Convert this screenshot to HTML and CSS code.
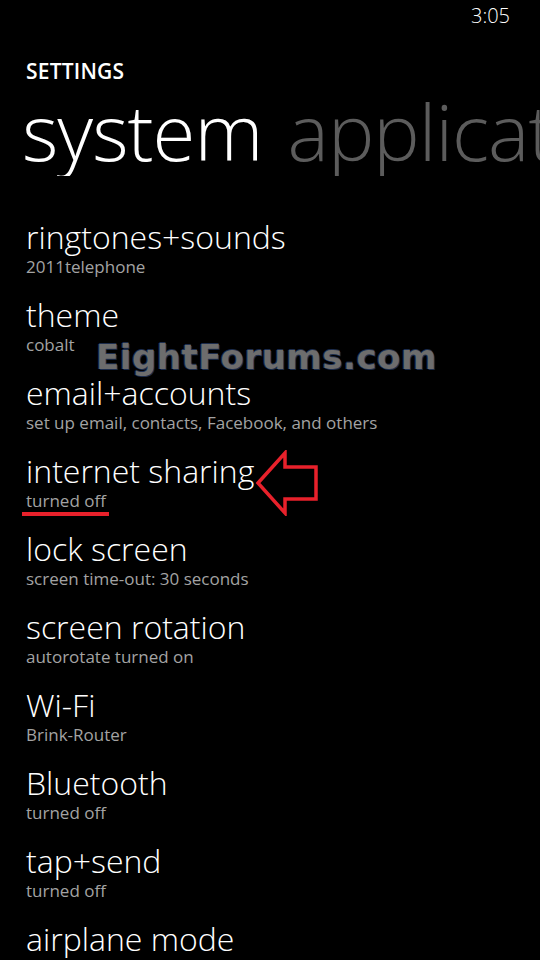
FILE: index.html
```html
<!DOCTYPE html>
<html lang="en">
<head>
  <meta charset="UTF-8" />
  <meta name="viewport" content="width=device-width, initial-scale=1.0" />
  <title>Settings - system</title>
  <link rel="stylesheet" href="styles.css">
</head>
<body>
  <div class="phone">
    <div class="status-bar">3:05</div>

    <header class="page-head">
      <div class="app-title">SETTINGS</div>
      <div class="pivot">
        <span class="pivot-item active">system</span>
        <span class="pivot-item">applications</span>
      </div>
    </header>

    <ul class="settings-list">
      <li>
        <div class="item-title">ringtones+sounds</div>
        <div class="item-sub">2011telephone</div>
      </li>
      <li>
        <div class="item-title">theme</div>
        <div class="item-sub">cobalt</div>
      </li>
      <li>
        <div class="item-title">email+accounts</div>
        <div class="item-sub">set up email, contacts, Facebook, and others</div>
      </li>
      <li class="highlighted">
        <div class="item-title">internet sharing
          <svg class="arrow" width="64" height="66" viewBox="0 0 64 66">
            <path d="M3 33 L30 3 L30 17 L61 17 L61 49 L30 49 L30 63 Z" fill="none" stroke="#e8212b" stroke-width="3.5" stroke-linejoin="miter" />
          </svg>
        </div>
        <div class="item-sub"><span class="underlined">turned off</span></div>
      </li>
      <li>
        <div class="item-title">lock screen</div>
        <div class="item-sub">screen time-out: 30 seconds</div>
      </li>
      <li>
        <div class="item-title">screen rotation</div>
        <div class="item-sub">autorotate turned on</div>
      </li>
      <li>
        <div class="item-title">Wi-Fi</div>
        <div class="item-sub">Brink-Router</div>
      </li>
      <li>
        <div class="item-title">Bluetooth</div>
        <div class="item-sub">turned off</div>
      </li>
      <li>
        <div class="item-title">tap+send</div>
        <div class="item-sub">turned off</div>
      </li>
      <li>
        <div class="item-title">airplane mode</div>
      </li>
    </ul>

    <div class="watermark">EightForums.com</div>
  </div>
</body>
</html>
```

FILE: styles.css
```css
html, body { margin: 0; padding: 0; background: #000; }
body { font-family: "Open Sans", "Noto Sans", sans-serif; color: #fff; }

.phone { position: relative; width: 540px; height: 960px; overflow: hidden; background: #000; }

.status-bar { height: 34px; padding-right: 30px; text-align: right; font-size: 20px; line-height: 32px; font-weight: 300; }

.page-head { padding-left: 26px; }
.app-title { font-size: 21px; font-weight: 600; line-height: 30px; margin-top: 22px; letter-spacing: 0.2px; }
.pivot { white-space: nowrap; overflow: hidden; font-size: 78px; font-weight: 300; line-height: 90px; margin-left: -4px; letter-spacing: -1px; }
.pivot-item { margin-right: 6px; color: #5c5c5c; }
.pivot-item.active { color: #fff; }

.settings-list { list-style: none; margin: 42px 0 0; padding: 0 0 0 26px; }
.settings-list li { height: 78px; }
.item-title { position: relative; font-size: 32px; font-weight: 300; line-height: 38px; white-space: nowrap; }
.item-sub { font-size: 17px; line-height: 22px; color: #a3a3a3; }

.arrow { position: absolute; left: 229px; top: -2px; }
.underlined { position: relative; }
.underlined::after { content: ""; position: absolute; left: -4px; right: -3px; bottom: -4px; height: 4px; background: #e8212b; }

.watermark {
  position: absolute; left: 96px; top: 337px;
  font-family: "DejaVu Sans", sans-serif; font-weight: bold; font-size: 34px; line-height: 40px; letter-spacing: 0.5px;
  color: #6d6d6d;
  text-shadow: 1px 1px 0 #1c2c4c, -1px 0 0 #1c2c4c, 0 -1px 0 #1c2c4c;
}
```
